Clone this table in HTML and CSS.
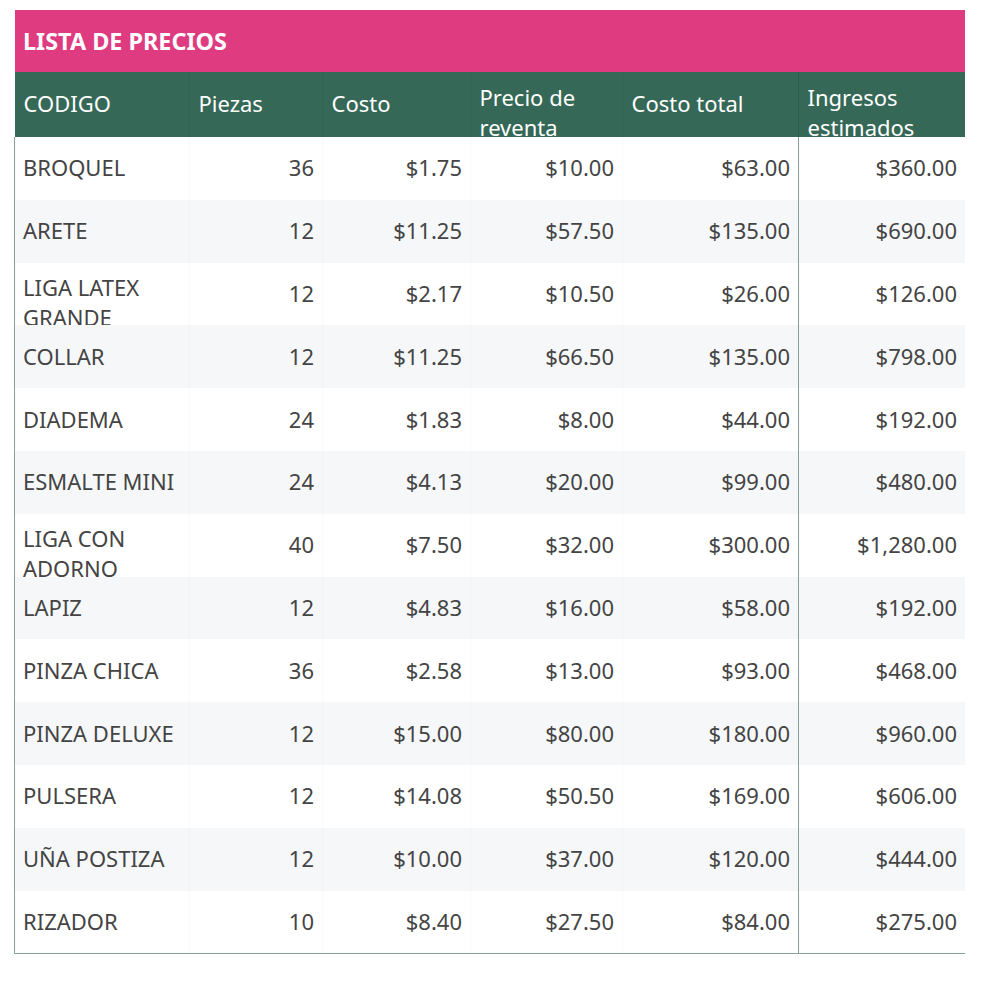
FILE: index.html
```html
<!DOCTYPE html>
<html lang="es">
<head>
<meta charset="utf-8">
<title>Lista de precios</title>
<link rel="stylesheet" href="styles.css">
</head>
<body>
<div class="sheet">
  <div class="title">LISTA DE PRECIOS</div>
  <div class="grid head">
    <div class="cell">CODIGO</div>
    <div class="cell">Piezas</div>
    <div class="cell">Costo</div>
    <div class="cell wrap">Precio de reventa</div>
    <div class="cell div">Costo total</div>
    <div class="cell wrap">Ingresos estimados</div>
  </div>
  <div class="body">
    <div class="grid row"><div class="cell">BROQUEL</div><div class="cell num">36</div><div class="cell num">$1.75</div><div class="cell num">$10.00</div><div class="cell num div">$63.00</div><div class="cell num">$360.00</div></div>
    <div class="grid row alt"><div class="cell">ARETE</div><div class="cell num">12</div><div class="cell num">$11.25</div><div class="cell num">$57.50</div><div class="cell num div">$135.00</div><div class="cell num">$690.00</div></div>
    <div class="grid row"><div class="cell wrap">LIGA LATEX GRANDE</div><div class="cell num">12</div><div class="cell num">$2.17</div><div class="cell num">$10.50</div><div class="cell num div">$26.00</div><div class="cell num">$126.00</div></div>
    <div class="grid row alt"><div class="cell">COLLAR</div><div class="cell num">12</div><div class="cell num">$11.25</div><div class="cell num">$66.50</div><div class="cell num div">$135.00</div><div class="cell num">$798.00</div></div>
    <div class="grid row"><div class="cell">DIADEMA</div><div class="cell num">24</div><div class="cell num">$1.83</div><div class="cell num">$8.00</div><div class="cell num div">$44.00</div><div class="cell num">$192.00</div></div>
    <div class="grid row alt"><div class="cell">ESMALTE MINI</div><div class="cell num">24</div><div class="cell num">$4.13</div><div class="cell num">$20.00</div><div class="cell num div">$99.00</div><div class="cell num">$480.00</div></div>
    <div class="grid row"><div class="cell wrap">LIGA CON ADORNO</div><div class="cell num">40</div><div class="cell num">$7.50</div><div class="cell num">$32.00</div><div class="cell num div">$300.00</div><div class="cell num">$1,280.00</div></div>
    <div class="grid row alt"><div class="cell">LAPIZ</div><div class="cell num">12</div><div class="cell num">$4.83</div><div class="cell num">$16.00</div><div class="cell num div">$58.00</div><div class="cell num">$192.00</div></div>
    <div class="grid row"><div class="cell">PINZA CHICA</div><div class="cell num">36</div><div class="cell num">$2.58</div><div class="cell num">$13.00</div><div class="cell num div">$93.00</div><div class="cell num">$468.00</div></div>
    <div class="grid row alt"><div class="cell">PINZA DELUXE</div><div class="cell num">12</div><div class="cell num">$15.00</div><div class="cell num">$80.00</div><div class="cell num div">$180.00</div><div class="cell num">$960.00</div></div>
    <div class="grid row"><div class="cell">PULSERA</div><div class="cell num">12</div><div class="cell num">$14.08</div><div class="cell num">$50.50</div><div class="cell num div">$169.00</div><div class="cell num">$606.00</div></div>
    <div class="grid row alt"><div class="cell">UÑA POSTIZA</div><div class="cell num">12</div><div class="cell num">$10.00</div><div class="cell num">$37.00</div><div class="cell num div">$120.00</div><div class="cell num">$444.00</div></div>
    <div class="grid row"><div class="cell">RIZADOR</div><div class="cell num">10</div><div class="cell num">$8.40</div><div class="cell num">$27.50</div><div class="cell num div">$84.00</div><div class="cell num">$275.00</div></div>
  </div>
</div>
</body>
</html>
```

FILE: styles.css
```css
* { box-sizing: border-box; }
html, body { margin: 0; padding: 0; background: #ffffff; }
body {
  font-family: "Noto Sans", "Open Sans", sans-serif;
  font-size: 22px;
  line-height: 30px;
  color: #444444;
  padding: 10px 0 0 15px;
}
.sheet { width: 950px; }
.title {
  height: 62px;
  background: #de3b81;
  color: #ffffff;
  font-weight: 700;
  font-size: 23.4px;
  padding: 0 8px 1px 8px;
  display: flex;
  align-items: center;
}
.grid {
  display: grid;
  grid-template-columns: 175px 133px 148px 152px 176px 166px;
}
.head {
  height: 65px;
  background: #356856;
  color: #ffffff;
}
.head .cell {
  height: 65px;
  padding: 8px 8px 12px 8.5px;
  border-right: 1px solid rgba(0,0,0,0.03);
}
.head .cell.wrap { padding-top: 10px; }
.body {
  border-left: 1.5px solid #86a098;
  border-bottom: 1.5px solid #86a098;
  margin-left: -1px;
}
.row { height: 62.8px; background: #ffffff; }
.row.alt { background: #f6f7f9; }
.cell {
  height: 62.8px;
  padding: 9px 8px 11px 8px;
  display: flex;
  align-items: center;
  overflow: hidden;
  border-right: 1px solid rgba(0,0,0,0.018);
}
.cell.wrap { align-items: flex-start; }
.cell.num { justify-content: flex-end; text-align: right; }
.row .cell.div { border-right: 1.5px solid #86a098; }
.head .cell.div { border-right: 1.5px solid rgba(0,0,0,0.1); }
.row .cell:last-child, .head .cell:last-child { border-right: none; }
```
